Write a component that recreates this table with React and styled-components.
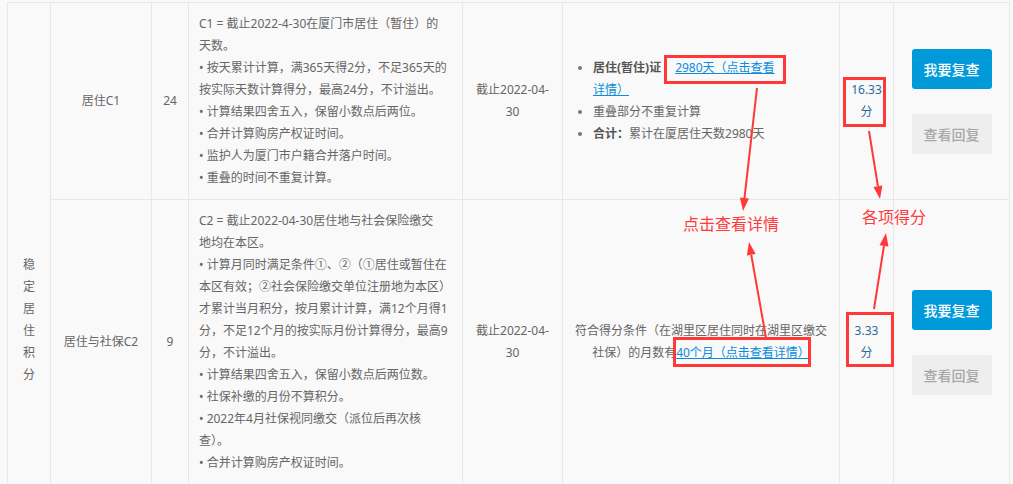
import React from 'react'
import styled, { createGlobalStyle } from 'styled-components'

const GlobalStyle = createGlobalStyle`
  html, body {
    margin: 0;
    padding: 0;
    background: #f9f9f9;
    overflow: hidden;
  }
  body {
    font-family: "Noto Sans", "Noto Sans CJK SC", sans-serif;
  }
`

const Page = styled.div`
  position: relative;
  width: 1013px;
  height: 484px;
  overflow: hidden;
  box-sizing: border-box;
  padding: 2px 0 0 7px;
`

const Table = styled.table`
  border-collapse: collapse;
  table-layout: fixed;
  width: 1003px;
  font-size: 12px;
  line-height: 22px;
  color: #666;
`

const Cell = styled.td`
  border: 1px solid #e8e8e8;
  padding: 10px;
  text-align: ${p => (p.$left ? 'left' : 'center')};
  white-space: ${p => (p.$left ? 'nowrap' : 'normal')};
  vertical-align: middle;
`

const GroupCell = styled.td`
  border: 1px solid #e8e8e8;
  padding: 251px 12px 0;
  text-align: center;
  vertical-align: top;
`

const Score = styled(Cell)`
  color: #2a6a9a;
`

const InfoList = styled.ul`
  margin: 0;
  padding: 0 40px 0 20px;
  text-align: left;
  list-style: disc;
  li::marker {
    color: #777;
  }
`

const Strong = styled.b`
  color: #555;
  font-weight: bold;
`

const DetailLink = styled.a`
  color: #0a8ddb;
  text-decoration: underline;
  margin-left: ${p => p.$gap || 0}px;
`

const Button = styled.button`
  display: block;
  width: 80px;
  height: 40px;
  margin: 0 auto;
  border: 0;
  border-radius: 3px;
  font-family: "Noto Sans CJK SC", sans-serif;
  font-size: 14px;
  font-weight: 500;
  background: ${p => (p.$primary ? '#009adb' : '#eeeeee')};
  color: ${p => (p.$primary ? '#fff' : '#a8a8a8')};
  & + & {
    margin-top: 25px;
  }
`

const Overlay = styled.svg`
  position: absolute;
  left: 0;
  top: 0;
  pointer-events: none;
`

const Callout = styled.span`
  position: absolute;
  left: ${p => p.$x}px;
  top: ${p => p.$y}px;
  color: #ff3b3b;
  font-family: "Noto Sans CJK SC", sans-serif;
  font-size: 16px;
  line-height: 22px;
  white-space: nowrap;
`

const RED = '#ff3838'

function Arrow({ x1, y1, x2, y2 }) {
  const dx = x2 - x1
  const dy = y2 - y1
  const len = Math.hypot(dx, dy)
  const ux = dx / len
  const uy = dy / len
  const bx = x2 - ux * 13
  const by = y2 - uy * 13
  const px = -uy * 4.5
  const py = ux * 4.5
  return (
    <g>
      <line x1={x1} y1={y1} x2={bx} y2={by} stroke={RED} strokeWidth="2" />
      <polygon
        points={`${x2},${y2} ${bx + px},${by + py} ${bx - px},${by - py}`}
        fill={RED}
      />
    </g>
  )
}

// each inner array is one rule, each string one printed line
const c1Rules = [
  ['C1 = 截止2022-4-30在厦门市居住（暂住）的', '天数。'],
  ['• 按天累计计算，满365天得2分，不足365天的', '按实际天数计算得分，最高24分，不计溢出。'],
  ['• 计算结果四舍五入，保留小数点后两位。'],
  ['• 合并计算购房产权证时间。'],
  ['• 监护人为厦门市户籍合并落户时间。'],
  ['• 重叠的时间不重复计算。'],
]

const c2Rules = [
  ['C2 = 截止2022-04-30居住地与社会保险缴交', '地均在本区。'],
  [
    '• 计算月同时满足条件①、②（①居住或暂住在',
    '本区有效；②社会保险缴交单位注册地为本区）',
    '才累计当月积分，按月累计计算，满12个月得1',
    '分，不足12个月的按实际月份计算得分，最高9',
    '分，不计溢出。',
  ],
  ['• 计算结果四舍五入，保留小数点后两位数。'],
  ['• 社保补缴的月份不算积分。'],
  ['• 2022年4月社保视同缴交（派位后再次核', '查）。'],
  ['• 合并计算购房产权证时间。'],
]

function Rules({ rules }) {
  return (
    <Cell $left>
      {rules.map(lines => (
        <div key={lines[0]}>
          {lines.map(l => (
            <div key={l}>{l}</div>
          ))}
        </div>
      ))}
    </Cell>
  )
}

function Actions() {
  return (
    <Cell>
      <Button $primary>我要复查</Button>
      <Button>查看回复</Button>
    </Cell>
  )
}

export default function App() {
  return (
    <Page>
      <GlobalStyle />
      <Table>
        <colgroup>
          <col style={{ width: 43 }} />
          <col style={{ width: 101 }} />
          <col style={{ width: 37 }} />
          <col style={{ width: 274 }} />
          <col style={{ width: 100 }} />
          <col style={{ width: 277 }} />
          <col style={{ width: 54 }} />
          <col style={{ width: 116 }} />
        </colgroup>
        <tbody>
          <tr>
            <GroupCell rowSpan={2}>稳定居住积分</GroupCell>
            <Cell>居住C1</Cell>
            <Cell>24</Cell>
            <Rules rules={c1Rules} />
            <Cell>截止2022-04-<br />30</Cell>
            <Cell>
              <InfoList>
                <li>
                  <Strong>居住(暂住)证</Strong>
                  <DetailLink $gap={14}>2980天（点击查看<br />详情）</DetailLink>
                </li>
                <li>重叠部分不重复计算</li>
                <li>
                  <Strong>合计：</Strong>累计在厦居住天数2980天
                </li>
              </InfoList>
            </Cell>
            <Score>16.33<br />分</Score>
            <Actions />
          </tr>
          <tr>
            <Cell>居住与社保C2</Cell>
            <Cell>9</Cell>
            <Rules rules={c2Rules} />
            <Cell>截止2022-04-<br />30</Cell>
            <Cell>
              符合得分条件（在湖里区居住同时在湖里区缴交<br />
              社保）的月数有<DetailLink>40个月（点击查看详情）</DetailLink>
            </Cell>
            <Score>3.33<br />分</Score>
            <Actions />
          </tr>
        </tbody>
      </Table>

      <Overlay width="1013" height="484" viewBox="0 0 1013 484">
        <g fill="none" stroke={RED} strokeWidth="3">
          <rect x="665.5" y="56.5" width="119" height="26" />
          <rect x="844.5" y="78.5" width="40" height="47" />
          <rect x="674.5" y="338.5" width="135" height="27" />
          <rect x="847.5" y="313.5" width="45" height="52" />
        </g>
        <Arrow x1={757} y1={88} x2={743} y2={211} />
        <Arrow x1={766} y1={338} x2={749} y2={242} />
        <Arrow x1={869} y1={131} x2={880} y2={199} />
        <Arrow x1={874} y1={309} x2={886} y2={233} />
      </Overlay>
      <Callout $x={683} $y={212}>点击查看详情</Callout>
      <Callout $x={862} $y={205}>各项得分</Callout>
    </Page>
  )
}
